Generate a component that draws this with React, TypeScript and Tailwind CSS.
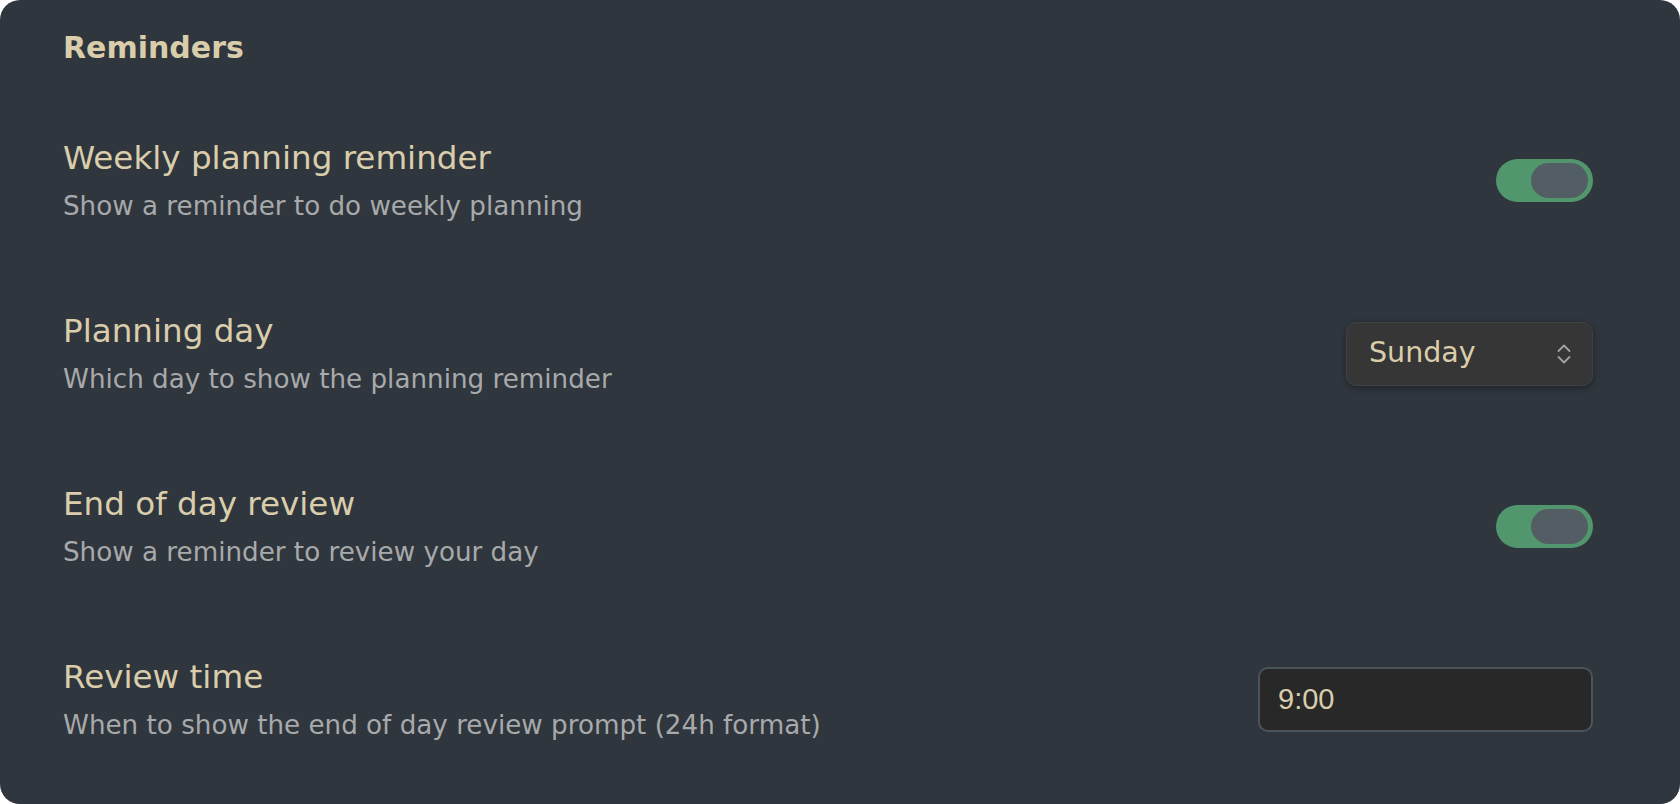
import { useState } from 'react'

type Row =
  | { kind: 'toggle'; title: string; desc: string; on: boolean }
  | { kind: 'select'; title: string; desc: string; value: string }
  | { kind: 'input'; title: string; desc: string; value: string }

const rows: Row[] = [
  { kind: 'toggle', title: 'Weekly planning reminder', desc: 'Show a reminder to do weekly planning', on: true },
  { kind: 'select', title: 'Planning day', desc: 'Which day to show the planning reminder', value: 'Sunday' },
  { kind: 'toggle', title: 'End of day review', desc: 'Show a reminder to review your day', on: true },
  { kind: 'input', title: 'Review time', desc: 'When to show the end of day review prompt (24h format)', value: '9:00' },
]

function Toggle({ initial }: { initial: boolean }) {
  const [on, setOn] = useState(initial)
  return (
    <button
      onClick={() => setOn(!on)}
      className={`flex h-[43px] w-[97px] items-center rounded-full px-[5px] ${on ? 'justify-end bg-[#52966e]' : 'justify-start bg-[#4a525a]'}`}
    >
      <span className="h-[35px] w-[57px] rounded-full bg-[#535d64]" />
    </button>
  )
}

function UpDown() {
  return (
    <svg width="14" height="22" viewBox="0 0 14 22" fill="none" stroke="#a3a3a3" strokeWidth="1.8" strokeLinecap="round" strokeLinejoin="round">
      <polyline points="1.5,8 7,2.5 12.5,8" />
      <polyline points="1.5,14 7,19.5 12.5,14" />
    </svg>
  )
}

export default function App() {
  return (
    <div className="min-h-screen bg-white">
      <div
        className="h-[804px] rounded-[20px] bg-[#2f363e] pl-[63px] pr-[87px]"
        style={{ fontFamily: '"DejaVu Sans", "Open Sans", sans-serif' }}
      >
        <h2 className="pt-[29px] text-[30px] leading-[38px] font-bold text-[#dacdab]">Reminders</h2>
        <div className="mt-[27px]">
          {rows.map((row) => (
            <div key={row.title} className="flex h-[173px] items-center justify-between">
              <div>
                <div className="text-[32.6px] leading-[40px] text-[#dacdab]">{row.title}</div>
                <div className="mt-[11px] text-[26.2px] leading-[34px] text-[#a8a9aa]">{row.desc}</div>
              </div>
              {row.kind === 'toggle' && <Toggle initial={row.on} />}
              {row.kind === 'select' && (
                <div className="flex h-[64px] w-[247px] items-center justify-between rounded-[10px] border border-[#414141] bg-[#363636] pr-[21px] pl-[22px] shadow-[0_2px_6px_rgba(0,0,0,0.35)]">
                  <span className="text-[28.5px] text-[#dacdab]">{row.value}</span>
                  <UpDown />
                </div>
              )}
              {row.kind === 'input' && (
                <input
                  defaultValue={row.value}
                  className="h-[65px] w-[335px] rounded-[10px] border-2 border-[#4b535b] bg-[#282828] px-[18px] text-[29px] text-[#dacdab] outline-none"
                  style={{ fontFamily: '"Liberation Sans", Arial, sans-serif' }}
                />
              )}
            </div>
          ))}
        </div>
      </div>
    </div>
  )
}
